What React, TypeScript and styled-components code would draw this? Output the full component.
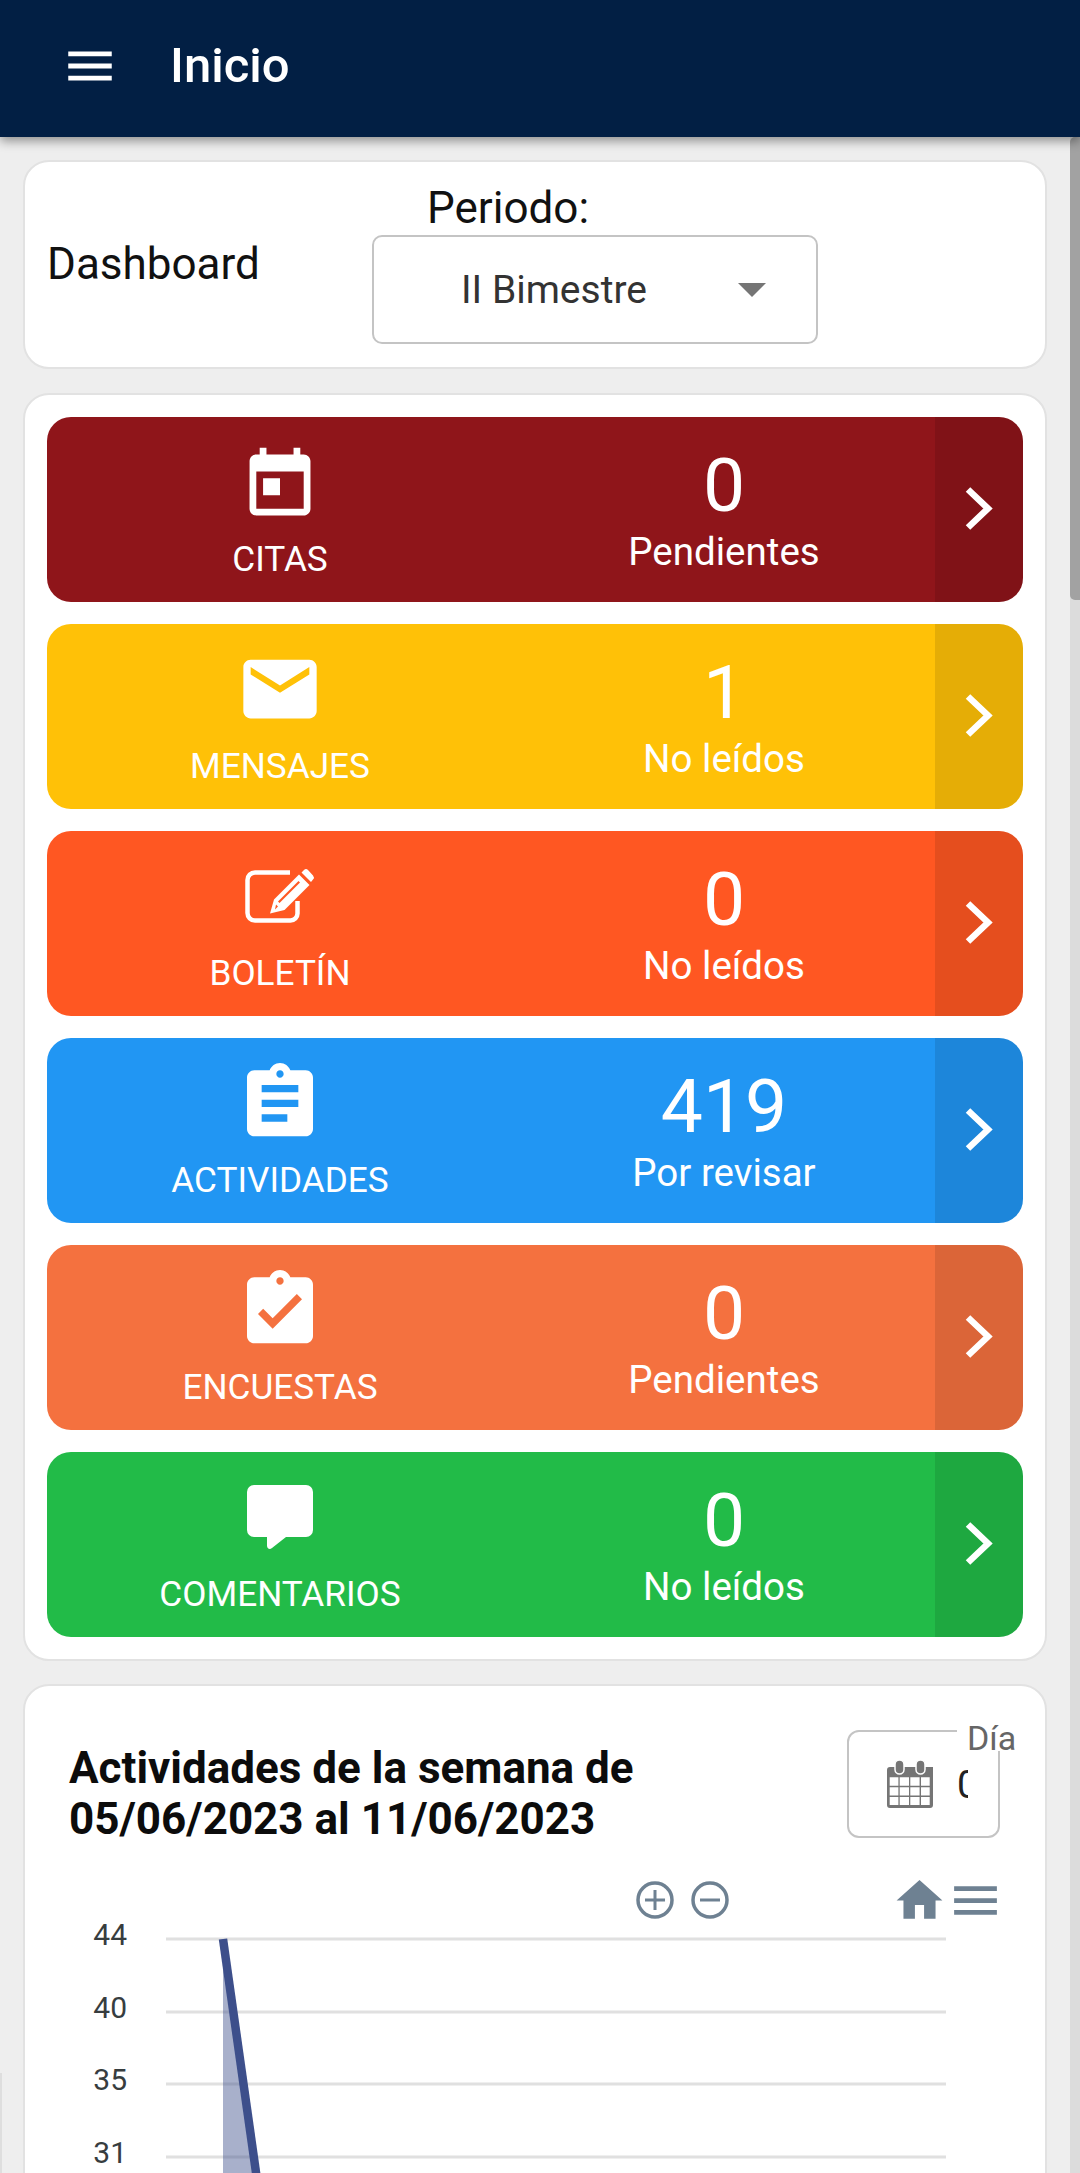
import styled, {createGlobalStyle} from "styled-components";
import type {ReactNode} from "react";

const GlobalStyle = createGlobalStyle`
  html, body {
    margin: 0;
    padding: 0;
    background: #eeeeee;
  }
  body {
    font-family: Roboto, "Liberation Sans", sans-serif;
    color: #111111;
  }
`

const Screen = styled.div`
  position: relative;
  width: 1080px;
  height: 2173px;
  overflow: hidden;
  display: flex;
  flex-direction: column;
`

const TopBar = styled.header`
  position: relative;
  z-index: 3;
  box-sizing: border-box;
  flex: none;
  height: 137px;
  padding: 0 0 5px 61px;
  display: flex;
  align-items: center;
  gap: 51px;
  background: #021f44;
  box-shadow: 0 4px 10px rgba(0, 0, 0, 0.4);
  color: #ffffff;
`

const TopBarTitle = styled.h1`
  margin: 0;
  font-size: 49px;
  font-weight: 500;
  line-height: 56px;
`

const Content = styled.main`
  flex: none;
  padding: 23px 33px 0 23px;
  display: flex;
  flex-direction: column;
  gap: 24px;
`

const Card = styled.section`
  box-sizing: border-box;
  width: 1024px;
  background: #ffffff;
  border: 2px solid #e2e2e2;
  border-radius: 26px;
`

const PeriodCard = styled(Card)`
  height: 209px;
  padding: 19px 0 23px 22px;
  display: flex;
  align-items: center;
`

const DashboardTitle = styled.div`
  width: 325px;
  margin-top: 2px;
  font-size: 44px;
  line-height: 52px;
`

const PeriodColumn = styled.div`
  display: flex;
  flex-direction: column;
`

const PeriodLabel = styled.div`
  padding-left: 55px;
  font-size: 44px;
  line-height: 54px;
`

const PeriodSelect = styled.div`
  box-sizing: border-box;
  width: 446px;
  height: 109px;
  padding: 0 50px 0 87px;
  display: flex;
  align-items: center;
  justify-content: space-between;
  border: 2px solid #c4c4c4;
  border-radius: 10px;
  font-size: 39px;
  color: #333333;
`

const SelectCaret = styled.span`
  width: 0;
  height: 0;
  border-left: 14px solid transparent;
  border-right: 14px solid transparent;
  border-top: 14px solid #757575;
`

const TilesCard = styled(Card)`
  padding: 22px;
  display: flex;
  flex-direction: column;
  gap: 22px;
`

const Tile = styled.div<{$color: string}>`
  height: 185px;
  display: grid;
  grid-template-columns: 466px 1fr 88px;
  border-radius: 24px;
  overflow: hidden;
  background: ${(props) => props.$color};
  color: #ffffff;
`

const TileName = styled.div`
  padding-top: 24px;
  display: flex;
  flex-direction: column;
  align-items: center;
`

const TileIcon = styled.svg`
  width: 88px;
  height: 88px;
  fill: #ffffff;
`

const TileLabel = styled.div`
  margin-top: 10px;
  font-size: 35.2px;
  line-height: 40px;
`

const TileCount = styled.div`
  padding-top: 32px;
  display: flex;
  flex-direction: column;
  align-items: center;
`

const CountValue = styled.div`
  font-size: 75px;
  line-height: 72px;
`

const CountCaption = styled.div`
  margin-top: 9px;
  font-size: 38.5px;
  line-height: 44px;
`

const TileArrow = styled.div`
  display: flex;
  align-items: center;
  justify-content: center;
  padding-bottom: 3px;
  background: rgba(0, 0, 0, 0.1);
`

const ChartCard = styled(Card)`
  height: 700px;
  margin-top: -1px;
`

const ChartHeader = styled.div`
  padding: 44px 45px 0 44px;
  display: flex;
  justify-content: space-between;
  align-items: flex-start;
`

const ChartTitle = styled.h2`
  margin: 13px 0 0;
  font-size: 44px;
  font-weight: 700;
  line-height: 51px;
  color: #0c0c0c;
`

const DateField = styled.div`
  position: relative;
  box-sizing: border-box;
  width: 153px;
  height: 108px;
  padding: 0 0 0 38px;
  display: flex;
  align-items: center;
  gap: 24px;
  border: 2px solid #c4c4c4;
  border-radius: 12px;
`

const DateLabel = styled.span`
  position: absolute;
  top: -7px;
  left: 108px;
  padding: 0 0 0 10px;
  background: #ffffff;
  font-size: 34px;
  line-height: 26px;
  color: #666666;
`

const DateValue = styled.div`
  width: 11px;
  overflow: hidden;
  white-space: nowrap;
  font-size: 38.5px;
  color: #222222;
`

const ChartToolbar = styled.div`
  margin-top: 26px;
  height: 58px;
  padding-left: 611px;
  display: flex;
  align-items: center;
`

const ToolbarIcon = styled.svg<{$size: number; $gap: number}>`
  flex: none;
  width: ${(props) => props.$size}px;
  height: ${(props) => props.$size}px;
  margin-left: ${(props) => props.$gap}px;
  fill: #6e8192;
`

const ChartPlot = styled.svg`
  display: block;
  width: 1020px;
  height: 400px;
  overflow: visible;
`

const AxisLabel = styled.text`
  font-family: Roboto, "Liberation Sans", sans-serif;
  font-size: 30px;
  fill: #373d3f;
`

const ScrollTrack = styled.div`
  position: absolute;
  top: 137px;
  right: 0;
  bottom: 0;
  width: 10px;
  background: #dcdcdc;
`

const ScrollThumb = styled.div`
  width: 10px;
  height: 463px;
  border-radius: 5px 0 0 5px;
  background: #a2a2a2;
`

const EdgeTab = styled.div`
  position: absolute;
  left: 0;
  top: 2073px;
  bottom: 0;
  width: 2px;
  background: #dedede;
`

const Icons: Record<string, ReactNode> = {
	today: <TileIcon viewBox="-1 -1 26 26"><path d="M19 3h-1V1h-2v2H8V1H6v2H5c-1.11 0-1.99.9-1.99 2L3 19c0 1.1.89 2 2 2h14c1.1 0 2-.9 2-2V5c0-1.1-.9-2-2-2zm0 16H5V8h14v11zM7 10h5v5H7z"/></TileIcon>,
	email: <TileIcon viewBox="0 0.8 24 24"><path d="M20 4H4c-1.1 0-1.99.9-1.99 2L2 18c0 1.1.9 2 2 2h16c1.1 0 2-.9 2-2V6c0-1.1-.9-2-2-2zm0 4l-8 5-8-5V6l8 5 8-5v2z"/></TileIcon>,
	edit: (
		<TileIcon viewBox="36 5 88 88">
			<path d="M90 22.5H55a7.5 7.5 0 0 0-7.5 7.5v33a7.5 7.5 0 0 0 7.5 7.5h35.500a7 7 0 0 0 7-7V51" fill="none" stroke="#ffffff" strokeWidth="4.500"/>
			<path fillRule="evenodd" d="M99 24.500L109.500 35 84.500 60 70 63.500 74 49.500zM98.500 31L78 51.500l1.500 1.500L100 32.500zM75 59.500l3-3-2-2z"/>
			<path d="M101.500 22.500l2.500-2.500a3 3 0 0 1 4 0l5 5.500a3 3 0 0 1 0 4l-2 2.500z"/>
		</TileIcon>
	),
	assignment: <TileIcon viewBox="0 0.73 24 24"><path d="M19 3h-4.180C14.400 1.840 13.300 1 12 1c-1.300 0-2.400.84-2.820 2H5c-1.100 0-2 .9-2 2v14c0 1.100.9 2 2 2h14c1.100 0 2-.9 2-2V5c0-1.100-.9-2-2-2zm-7 0c.55 0 1 .45 1 1s-.45 1-1 1-1-.45-1-1 .45-1 1-1zm2 14H7v-2h7v2zm3-4H7v-2h10v2zm0-4H7V7h10v2z"/></TileIcon>,
	survey: <TileIcon viewBox="0 0.73 24 24"><path d="M19 3h-4.180C14.400 1.840 13.300 1 12 1c-1.300 0-2.400.84-2.820 2H5c-1.100 0-2 .9-2 2v14c0 1.100.9 2 2 2h14c1.100 0 2-.9 2-2V5c0-1.100-.9-2-2-2zm-7 0c.55 0 1 .45 1 1s-.45 1-1 1-1-.45-1-1 .45-1 1-1zm-2 14l-4-4 1.410-1.410L10 14.170l6.590-6.590L18 9l-8 8z"/></TileIcon>,
	comment: <TileIcon viewBox="36 6 88 88"><path d="M54 15h52a7 7 0 0 1 7 7v38a7 7 0 0 1-7 7H86L72 78c-2.500 2-5 .5-5-2.500V67H54a7 7 0 0 1-7-7V22a7 7 0 0 1 7-7z"/></TileIcon>,
}

const tiles = [
	{name: "CITAS", icon: "today", count: "0", caption: "Pendientes", color: "#8f151a"},
	{name: "MENSAJES", icon: "email", count: "1", caption: "No leídos", color: "#ffc107"},
	{name: "BOLETÍN", icon: "edit", count: "0", caption: "No leídos", color: "#ff5722"},
	{name: "ACTIVIDADES", icon: "assignment", count: "419", caption: "Por revisar", color: "#2196f3"},
	{name: "ENCUESTAS", icon: "survey", count: "0", caption: "Pendientes", color: "#f4713f"},
	{name: "COMENTARIOS", icon: "comment", count: "0", caption: "No leídos", color: "#22bb48"},
]

const gridLines = [{y: 10, label: "44"}, {y: 83, label: "40"}, {y: 155, label: "35"}, {y: 228, label: "31"}]

const App = () => {
	return (
		<Screen>
			<GlobalStyle/>
			<TopBar>
				<svg width="58" height="58" viewBox="0 0 24 24" fill="#ffffff">
					<path d="M3 18h18v-2H3v2zm0-5h18v-2H3v2zm0-7v2h18V6H3z"/>
				</svg>
				<TopBarTitle>Inicio</TopBarTitle>
			</TopBar>
			<Content>
				<PeriodCard>
					<DashboardTitle>Dashboard</DashboardTitle>
					<PeriodColumn>
						<PeriodLabel>Periodo:</PeriodLabel>
						<PeriodSelect>
							II Bimestre
							<SelectCaret/>
						</PeriodSelect>
					</PeriodColumn>
				</PeriodCard>
				<TilesCard>
					{tiles.map((tile) => (
						<Tile key={tile.name} $color={tile.color}>
							<TileName>
								{Icons[tile.icon]}
								<TileLabel>{tile.name}</TileLabel>
							</TileName>
							<TileCount>
								<CountValue>{tile.count}</CountValue>
								<CountCaption>{tile.caption}</CountCaption>
							</TileCount>
							<TileArrow>
								<svg width="28" height="43" viewBox="0 0 28 43" fill="none" stroke="#ffffff" strokeWidth="6.500">
									<path d="M3 2.500L23 21.500 3 40.500" strokeLinejoin="miter"/>
								</svg>
							</TileArrow>
						</Tile>
					))}
				</TilesCard>
				<ChartCard>
					<ChartHeader>
						<ChartTitle>
							Actividades de la semana de<br/>05/06/2023 al 11/06/2023
						</ChartTitle>
						<DateField>
							<DateLabel>Día</DateLabel>
							<svg width="46" height="48" viewBox="0 0 46 48" fill="#757575">
								<path fillRule="evenodd" d="M3 7h43v38a3 3 0 0 1-3 3H3a3 3 0 0 1-3-3V10a3 3 0 0 1 3-3zM2.700 17.300v8.500h8.700v-8.500zM12.700 17.300v8.500h9.300v-8.500zM23.300 17.300v8.500h9.300v-8.500zM34 17.300v8.500h8.700v-8.500zM2.700 27.300v8.200h8.700v-8.200zM12.700 27.300v8.200h9.300v-8.200zM23.300 27.300v8.200h9.300v-8.200zM34 27.300v8.200h8.700v-8.200zM2.700 37v8h8.700v-8zM12.700 37v8h9.300v-8zM23.300 37v8h9.300v-8zM34 37v8h8.700v-8z"/>
								<rect x="8" y="0" width="9" height="14" rx="4.500" stroke="#ffffff" strokeWidth="1.500"/>
								<rect x="29" y="0" width="9" height="14" rx="4.500" stroke="#ffffff" strokeWidth="1.500"/>
							</svg>
							<DateValue>05/06/2023</DateValue>
						</DateField>
					</ChartHeader>
					<ChartToolbar>
						<ToolbarIcon $size={38} $gap={0} viewBox="0 0 38 38">
							<circle cx="19" cy="19" r="17" fill="none" stroke="#6e8192" strokeWidth="3.500"/>
							<path d="M17.500 9h3v8.500H29v3h-8.500V29h-3v-8.500H9v-3h8.500z"/>
						</ToolbarIcon>
						<ToolbarIcon $size={38} $gap={17} viewBox="0 0 38 38">
							<circle cx="19" cy="19" r="17" fill="none" stroke="#6e8192" strokeWidth="3.500"/>
							<path d="M9 17.500h20v3H9z"/>
						</ToolbarIcon>
						<ToolbarIcon $size={55} $gap={163} viewBox="0 0 24 24">
							<path d="M10 20v-6h4v6h5v-8h3L12 3 2 12h3v8z"/>
						</ToolbarIcon>
						<ToolbarIcon $size={57} $gap={0} viewBox="0 0 24 24">
							<path d="M3 18h18v-2H3v2zm0-5h18v-2H3v2zm0-7v2h18V6H3z"/>
						</ToolbarIcon>
					</ChartToolbar>
					<ChartPlot viewBox="0 0 1020 400">
						{gridLines.map((line) => (
							<g key={line.label}>
								<line x1="141" x2="921" y1={line.y} y2={line.y} stroke="#e0e0e0" strokeWidth="3"/>
								<AxisLabel x="102" y={line.y + 6} textAnchor="end">{line.label}</AxisLabel>
							</g>
						))}
						<path d="M198 10L239 300H198z" fill="#3d4f8b" fillOpacity="0.45"/>
						<path d="M198 10L239 300" fill="none" stroke="#3d4f8b" strokeWidth="8.500"/>
					</ChartPlot>
				</ChartCard>
			</Content>
			<ScrollTrack><ScrollThumb/></ScrollTrack>
			<EdgeTab/>
		</Screen>
	)
}

export default App
